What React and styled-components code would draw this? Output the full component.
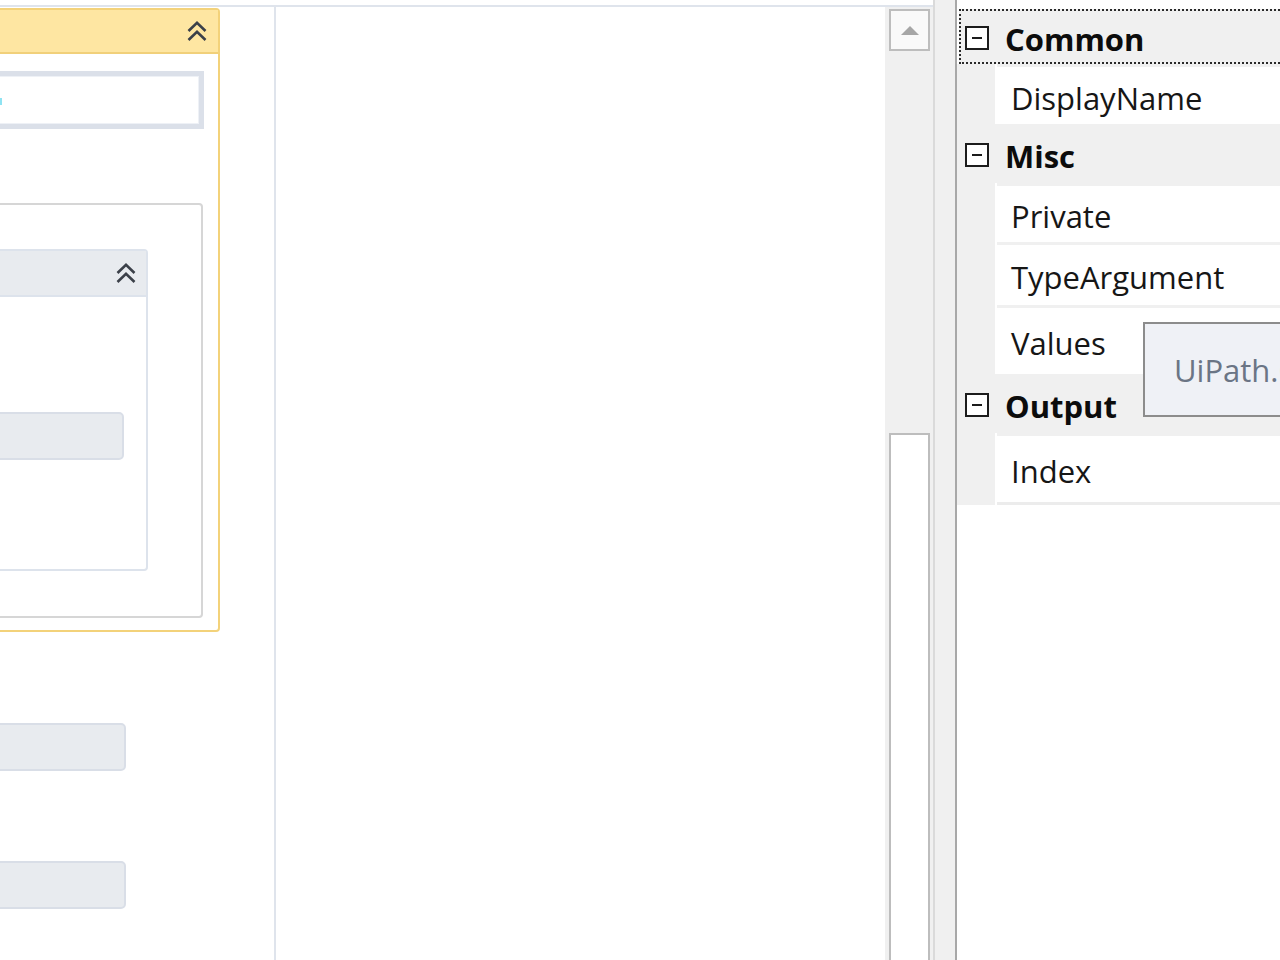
import React from 'react';
import styled, { createGlobalStyle } from 'styled-components';

const GlobalStyle = createGlobalStyle`
  html, body {
    margin: 0;
    padding: 0;
    background: #ffffff;
    overflow: hidden;
  }
  * {
    box-sizing: border-box;
  }
`;

const properties = [
  { kind: 'category', label: 'Common', height: 55, focused: true },
  { kind: 'property', label: 'DisplayName', height: 60 },
  { kind: 'category', label: 'Misc', height: 59 },
  { kind: 'property', label: 'Private', height: 59 },
  { kind: 'property', label: 'TypeArgument', height: 63 },
  { kind: 'property', label: 'Values', height: 69 },
  { kind: 'category', label: 'Output', height: 59 },
  { kind: 'property', label: 'Index', height: 72, last: true },
];

const ChevronsUp = () => (
  <svg width="22" height="22" viewBox="0 0 22 22" fill="none">
    <path d="M2.5 11 L11 2.8 L19.5 11" stroke="#3b4049" strokeWidth="2.6" strokeLinejoin="miter" />
    <path d="M2.5 20 L11 11.8 L19.5 20" stroke="#3b4049" strokeWidth="2.6" strokeLinejoin="miter" />
  </svg>
);

const App = () => {
  return (
    <>
      <GlobalStyle />
      <Root>
        <Designer>
          <DesignerBody>
            <Canvas>
              <SequenceColumn>
                <ActivityCard>
                  <ActivityHeader>
                    <ChevronsUp />
                  </ActivityHeader>
                  <ActivityBody>
                    <ExpressionBox>
                      <CaretMark />
                    </ExpressionBox>
                    <DropArea>
                      <InnerCard>
                        <InnerHeader>
                          <ChevronsUp />
                        </InnerHeader>
                        <InnerBody>
                          <Pill $right={22} />
                        </InnerBody>
                      </InnerCard>
                    </DropArea>
                  </ActivityBody>
                </ActivityCard>
                <Pill $right={148} $top={91} />
                <Pill $right={148} $top={90} />
              </SequenceColumn>
            </Canvas>
            <VScroll>
              <ScrollButton>
                <ArrowUp />
              </ScrollButton>
              <ScrollThumb />
            </VScroll>
          </DesignerBody>
        </Designer>
        <Splitter />
        <PropertyGrid>
          {properties.map((item) =>
            item.kind === 'category' ? (
              <CategoryRow key={item.label} $height={item.height} $focused={item.focused}>
                <Gutter $focused={item.focused}>
                  <ExpanderBox />
                </Gutter>
                <CategoryLabel>{item.label}</CategoryLabel>
              </CategoryRow>
            ) : (
              <PropertyRow key={item.label} $height={item.height}>
                <Gutter />
                <NameCell $last={item.last}>{item.label}</NameCell>
              </PropertyRow>
            )
          )}
          <Tooltip>UiPath.Core.Activities</Tooltip>
        </PropertyGrid>
      </Root>
    </>
  );
};

export default App;

const Root = styled.div`
  display: flex;
  width: 1280px;
  height: 960px;
  overflow: hidden;
  font-family: 'Open Sans', 'Noto Sans', sans-serif;
`;

const Designer = styled.div`
  display: flex;
  flex-direction: column;
  width: 933px;
  flex-shrink: 0;
  padding-top: 5px;
  background: #ffffff;
`;

const DesignerBody = styled.div`
  display: flex;
  flex: 1;
  min-height: 0;
  border-top: 2px solid #dfe4ec;
`;

const Canvas = styled.div`
  display: flex;
  flex: 1;
  overflow: hidden;
  background: #ffffff;
`;

const SequenceColumn = styled.div`
  display: flex;
  flex-direction: column;
  width: 276px;
  flex-shrink: 0;
  padding-top: 1px;
  border-right: 2px solid #dfe4ec;
`;

const ActivityCard = styled.div`
  display: flex;
  flex-direction: column;
  width: 250px;
  margin-left: -30px;
  border: 2px solid #f3d27a;
  border-radius: 4px;
  background: #ffffff;
`;

const ActivityHeader = styled.div`
  display: flex;
  justify-content: flex-end;
  align-items: center;
  height: 44px;
  padding-right: 10px;
  background: #fee6a2;
  border-bottom: 2px solid #f1d07a;
`;

const ActivityBody = styled.div`
  display: flex;
  flex-direction: column;
  padding: 17px 14px 12px 0;
`;

const ExpressionBox = styled.div`
  display: flex;
  align-items: center;
  height: 58px;
  border: 5px solid #dbe0e9;
  box-shadow: inset 0 0 0 1px #eef1f6;
  background: #ffffff;
`;

const CaretMark = styled.span`
  display: block;
  width: 3px;
  height: 7px;
  margin-left: 22px;
  margin-top: 2px;
  background: #8fe3f2;
`;

const DropArea = styled.div`
  display: flex;
  flex-direction: column;
  height: 415px;
  margin-top: 74px;
  margin-right: 1px;
  padding: 44px 53px 45px 0;
  border: 2px solid #d6d6d6;
  border-radius: 4px;
`;

const InnerCard = styled.div`
  display: flex;
  flex-direction: column;
  flex: 1;
  border: 2px solid #dde3ec;
  border-radius: 4px;
  background: #ffffff;
`;

const InnerHeader = styled.div`
  display: flex;
  justify-content: flex-end;
  align-items: center;
  height: 46px;
  padding-right: 9px;
  background: #e8ebef;
  border-bottom: 2px solid #dde3ec;
`;

const InnerBody = styled.div`
  display: flex;
  flex-direction: column;
  padding-top: 115px;
`;

const Pill = styled.div`
  height: 48px;
  margin-top: ${({ $top }) => ($top ? `${$top}px` : '0')};
  margin-right: ${({ $right }) => $right}px;
  margin-left: -10px;
  border: 2px solid #d9dee7;
  border-radius: 5px;
  background: #e8ebef;
  flex-shrink: 0;
`;

const VScroll = styled.div`
  display: flex;
  flex-direction: column;
  width: 48px;
  flex-shrink: 0;
  padding: 2px 3px 0 4px;
  background: #f0f0f0;
`;

const ScrollButton = styled.div`
  display: flex;
  justify-content: center;
  align-items: center;
  height: 42px;
  border: 2px solid #bdbdbd;
  background: #f9f9f9;
`;

const ArrowUp = styled.div`
  width: 0;
  height: 0;
  border-left: 9px solid transparent;
  border-right: 9px solid transparent;
  border-bottom: 9px solid #a6a6a6;
`;

const ScrollThumb = styled.div`
  flex: 1;
  margin-top: 382px;
  border: 2px solid #bdbdbd;
  border-bottom: none;
  background: #ffffff;
`;

const Splitter = styled.div`
  width: 24px;
  flex-shrink: 0;
  background: #f0f0f0;
  border-left: 2px solid #dadada;
  border-right: 2px solid #a8a8a8;
`;

const PropertyGrid = styled.div`
  position: relative;
  display: flex;
  flex-direction: column;
  flex: 1;
  padding-top: 9px;
  overflow: hidden;
  background: #ffffff;
`;

const Gutter = styled.div`
  display: flex;
  align-items: center;
  width: ${({ $focused }) => ($focused ? '36px' : '38px')};
  flex-shrink: 0;
  padding-left: ${({ $focused }) => ($focused ? '6px' : '8px')};
  padding-top: 3px;
  background: #f0f0f0;
`;

const CategoryRow = styled.div`
  display: flex;
  height: ${({ $height }) => $height}px;
  background: #f0f0f0;
  outline: ${({ $focused }) => ($focused ? '2px dotted #2a2a2a' : 'none')};
  outline-offset: -2px;
  margin-left: ${({ $focused }) => ($focused ? '2px' : '0')};
  margin-right: ${({ $focused }) => ($focused ? '-12px' : '0')};
`;

const ExpanderBox = styled.div`
  position: relative;
  width: 24px;
  height: 24px;
  border: 2px solid #1c1c1c;
  background: #ffffff;
  &::after {
    content: '';
    position: absolute;
    left: 5px;
    top: 9px;
    width: 10px;
    height: 2px;
    background: #1c1c1c;
  }
`;

const CategoryLabel = styled.div`
  display: flex;
  align-items: center;
  padding: 5px 0 0 10px;
  font-size: 31px;
  font-weight: 700;
  color: #0c0c0c;
  white-space: nowrap;
`;

const PropertyRow = styled.div`
  display: flex;
  height: ${({ $height }) => $height}px;
`;

const NameCell = styled.div`
  display: flex;
  align-items: center;
  flex: 1;
  margin-left: 2px;
  padding: 4px 0 0 14px;
  border-top: 3px solid #f0f0f0;
  border-bottom: ${({ $last }) => ($last ? '3px solid #ececec' : 'none')};
  font-size: 31px;
  color: #161616;
  white-space: nowrap;
  background: #ffffff;
`;

const Tooltip = styled.div`
  position: absolute;
  left: 186px;
  top: 322px;
  width: 240px;
  height: 95px;
  display: flex;
  align-items: center;
  padding-left: 29px;
  border: 2px solid #8c8c8c;
  background: #eff1f6;
  font-size: 31px;
  color: #6b7585;
  white-space: nowrap;
`;
